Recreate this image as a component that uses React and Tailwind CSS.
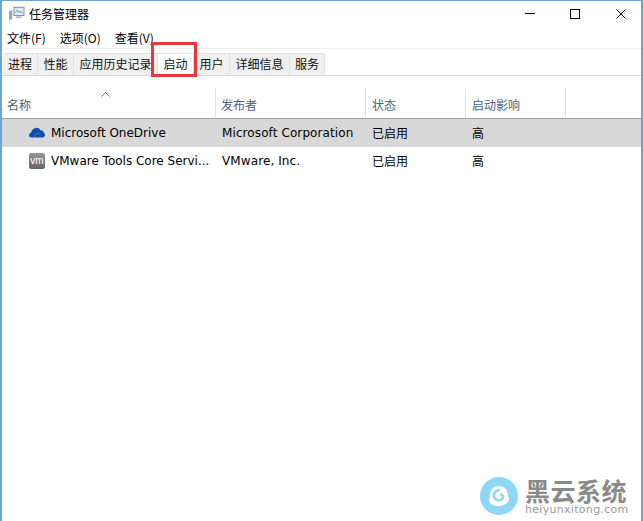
import React from "react";

const cjk = "font-['Noto_Sans_CJK_SC','Noto_Sans',sans-serif]";

const tabs = [
  { label: "进程", width: "w-[35px]" },
  { label: "性能", width: "w-[36px]" },
  { label: "应用历史记录", width: "w-[84px]" },
  { label: "启动", width: "w-[36px]", active: true },
  { label: "用户", width: "w-[36px]" },
  { label: "详细信息", width: "w-[60px]" },
  { label: "服务", width: "w-[35px]" },
];

const columns = [
  { label: "名称", width: "w-[214px]", pad: "pl-[5px]" },
  { label: "发布者", width: "w-[150px]", pad: "pl-[5px]" },
  { label: "状态", width: "w-[100px]", pad: "pl-[6px]" },
  { label: "启动影响", width: "w-[100px]", pad: "pl-[6px]" },
];

const rows = [
  { name: "Microsoft OneDrive", publisher: "Microsoft Corporation", icon: "cloud", selected: true },
  { name: "VMware Tools Core Servi...", publisher: "VMware, Inc.", icon: "vm" },
];

const AppIcon = () => (
  <svg width="17" height="15" viewBox="0 0 20 18" fill="none">
    <rect x="7" y="1.5" width="12" height="10" fill="#dcecf5" stroke="#6b7f8c" />
    <path d="M8.5 8l2.5-3 2 3 1.5-2 3 3" stroke="#3f8fb5" strokeWidth="1" />
    <path d="M1 6.500l4-2v11l-4 1.500z" fill="#9aa7b0" />
    <rect x="9" y="12.500" width="7" height="2" fill="#a9b4bb" />
  </svg>
);

const Cloud = () => (
  <svg width="16" height="11" viewBox="0 0 16 11">
    <path
      d="M2.500 10.500C1 10.500 0 9.500 0 8.200 0 7 .8 6 2 5.700 2.700 3 4.800 .8 7.500 .8c1.700 0 3 .8 3.800 2.400 2-.3 3.500 1 3.700 2.800.7.400 1 1.200 1 2 0 1.400-1 2.500-2.400 2.500z"
      fill="#0f4fb0"
    />
    <path d="M5.500 10.500c0-2.500 2-4.500 5-4.300" fill="none" stroke="#5f8fd0" strokeWidth=".8" />
  </svg>
);

const VmIcon = () => (
  <div className="flex h-[16px] w-[16px] items-center justify-center rounded-[2px] bg-gradient-to-b from-[#969696] to-[#666666] font-['Liberation_Sans',sans-serif] text-[10px] leading-none text-white">
    vm
  </div>
);

const Watermark = () => (
  <div className="absolute top-[476px] left-[478px] flex items-start gap-[7px]">
    <svg width="38" height="38" viewBox="0 0 38 38">
      <circle cx="19" cy="19" r="19" fill="#8fd7f6" />
      <path
        d="M19 9c-5 0-9 4-9 9 0 2-1 4-1 5 0 4 5 6 10 6s10-3 10-7c0-1-.5-2-1-3 0-6-4-10-9-10z"
        fill="#fff"
      />
      <path d="M20 13c-4 0-6.500 3-6 6.500s5.500 5 8 2.500c2-2 .5-5-2-4.500" fill="none" stroke="#8fd7f6" strokeWidth="2.500" />
    </svg>
    <div className="flex w-[104px] flex-col">
      <div className={`${cjk} text-[25px] leading-[26px] font-bold tracking-[.5px] whitespace-nowrap text-[#8a8a8a]`}>黑云系统</div>
      <div className="font-['DejaVu_Sans',sans-serif] text-[11px] leading-[14px] tracking-[.3px] whitespace-nowrap text-[#9a9a9a]">heiyunxitong.com</div>
    </div>
  </div>
);

const App = () => {
  return (
    <div className={`relative flex h-[521px] w-[643px] flex-col overflow-hidden border-x-2 border-t border-[#6ea4dc] bg-white text-[12px] text-black ${cjk}`}>
      <header className="flex h-[25px] shrink-0 items-center justify-between">
        <div className="flex items-center gap-[4px] pl-[6px]">
          <AppIcon />
          <span className="text-[12px]">任务管理器</span>
        </div>
        <div className="flex items-center">
          <div className="mr-[35px] h-px w-[10px] bg-black" />
          <div className="mr-[36px] h-[10px] w-[10px] border border-black" />
          <svg className="mr-[15px]" width="10" height="10" viewBox="0 0 10 10">
            <path d="M.5.500l9 9M9.500.500l-9 9" stroke="#000" />
          </svg>
        </div>
      </header>

      <nav className="flex h-[23px] shrink-0 items-center gap-[14px] border-b border-[#f0f0f0] pt-[2px] pl-[5px]">
        <span>文件(F)</span>
        <span>选项(O)</span>
        <span>查看(V)</span>
      </nav>

      <div className="flex h-[27px] shrink-0 border-b border-[#d9d9d9] pt-[4px] pl-[1px]">
        {tabs.map((tab) => (
          <div
            key={tab.label}
            className={`flex items-center justify-center border-t border-r border-[#e2e2e2] pb-[2px] text-[#111] ${tab.width} ${tab.active ? "-mb-px bg-white" : "bg-[#f0f0f0]"}`}
          >
            {tab.label}
          </div>
        ))}
      </div>

      <div className="relative flex h-[43px] shrink-0 items-end border-b border-[#a0a0a0] text-[#4c607a]">
        <svg className="absolute top-[16px] left-[99px]" width="9" height="5" viewBox="0 0 9 5">
          <path d="M.5 4.500l4-4 4 4" fill="none" stroke="#7a7a7a" />
        </svg>
        {columns.map((col) => (
          <div key={col.label} className={`flex h-[30px] items-end border-r border-[#e2e2e2] pb-[4px] ${col.width} ${col.pad}`}>
            {col.label}
          </div>
        ))}
      </div>

      {rows.map((row) => (
        <div key={row.name} className={`flex h-[28px] shrink-0 items-center pb-[1px] ${row.selected ? "bg-[#d8d8d8]" : "bg-white"}`}>
          <div className="flex w-[213px] items-center">
            <div className="flex w-[49px] shrink-0 pl-[27px]">{row.icon === "cloud" ? <Cloud /> : <VmIcon />}</div>
            <span className="font-['DejaVu_Sans',sans-serif] whitespace-nowrap">{row.name}</span>
          </div>
          <div className="w-[151px] pl-[7px] font-['DejaVu_Sans',sans-serif] tracking-[.1px] whitespace-nowrap">{row.publisher}</div>
          <div className="w-[100px] pl-[6px]">已启用</div>
          <div className="w-[100px] pl-[6px]">高</div>
        </div>
      ))}

      <div className="pointer-events-none absolute top-[41px] left-[149px] h-[35px] w-[46px] border-[3px] border-[#e53a3d]" />
      <Watermark />
    </div>
  );
};

export default App;
